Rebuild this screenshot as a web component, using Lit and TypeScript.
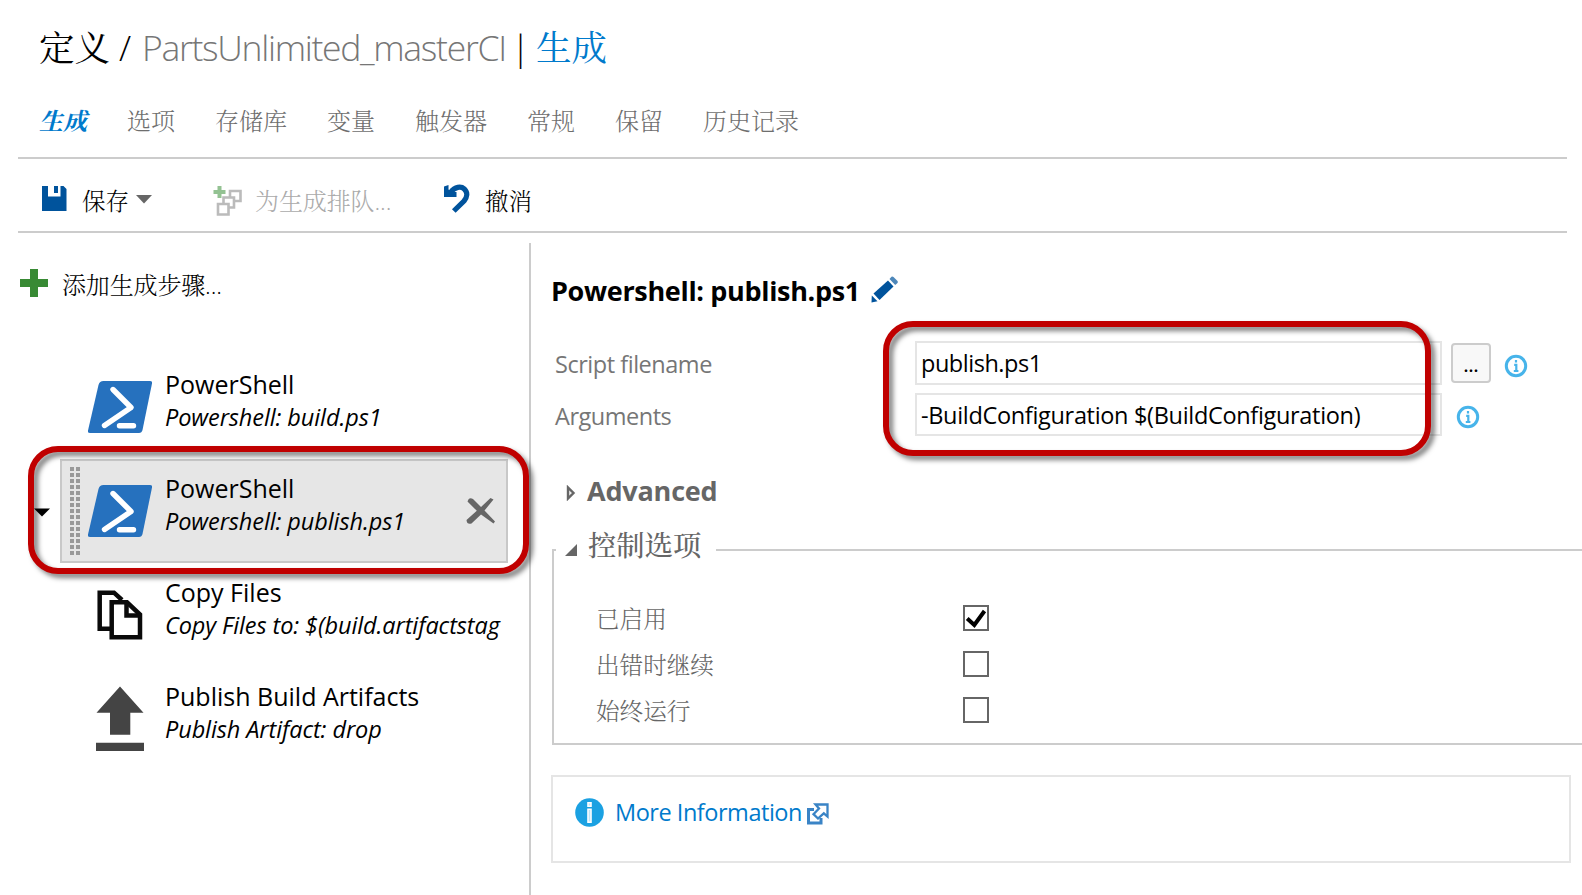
import { LitElement, html, css, svg, nothing } from "lit";
import { customElement } from "lit/decorators.js";
import { classMap } from "lit/directives/class-map.js";

interface Step {
  title: string;
  detail: string;
  icon: "powershell" | "copy" | "publish";
  selected?: boolean;
}

const TABS = ["生成", "选项", "存储库", "变量", "触发器", "常规", "保留", "历史记录"];

const STEPS: Step[] = [
  { title: "PowerShell", detail: "Powershell: build.ps1", icon: "powershell" },
  { title: "PowerShell", detail: "Powershell: publish.ps1", icon: "powershell", selected: true },
  { title: "Copy Files", detail: "Copy Files to: $(build.artifactstag", icon: "copy" },
  { title: "Publish Build Artifacts", detail: "Publish Artifact: drop", icon: "publish" },
];

const OPTIONS = [
  { label: "已启用", checked: true },
  { label: "出错时继续", checked: false },
  { label: "始终运行", checked: false },
];

const STEP_ICONS = {
  powershell: svg`
    <path d="M103.5 26H150q2.500 0 2 2.500L142.500 75q-.7 3-3.500 3H90q-2.500 0-2-2.500L98.500 30q1-4 5-4z" fill="#2671be"/>
    <path d="M113 34.500L131 52.500L104.500 70.500M119.500 70.700H133.500" fill="none" stroke="#fff" stroke-width="5.400" stroke-linecap="round" stroke-linejoin="round"/>`,
  copy: svg`
    <path d="M110 65.700H99.700V29.700H114L122 37" fill="none" stroke="#0a0a0a" stroke-width="4.500"/>
    <path d="M111.700 39.300H127L140 51.500V74.300H111.700z" fill="#fff" stroke="#0a0a0a" stroke-width="4.500"/>
    <path d="M126.500 39V52.500H140" fill="none" stroke="#0a0a0a" stroke-width="4.500"/>`,
  publish: svg`<path d="M120 19.500L143.500 45.700H130.300V67.700H110V45.700H96.500zM96 75.700H144V84H96z" fill="#444"/>`,
};

@customElement("app-root")
export class AppRoot extends LitElement {
  static styles = css`
    :host {
      display: block;
      position: relative;
      width: 1582px;
      height: 895px;
      overflow: hidden;
      background: #fff;
      color: #000;
      font-family: "Open Sans", "Noto Serif CJK SC", "Noto Sans CJK SC", serif;
      font-size: 24px;
    }
    * { box-sizing: border-box; }
    svg { display: block; flex: none; }
    .title {
      display: flex;
      padding: 23px 0 0 39px;
      height: 71px;
      line-height: 48px;
      font-size: 35.5px;
      font-weight: 300;
      white-space: pre;
    }
    .cjk { font-weight: 400; }
    .root { width: 80px; }
    .slash { width: 23px; }
    .name { width: 369px; color: #767676; letter-spacing: -1.3px; }
    .bar { width: 25px; }
    .link { color: #007acc; }
    .tabs {
      display: flex;
      gap: 40px;
      margin: 33px 15px 0 18px;
      padding-left: 21px;
      height: 55px;
      line-height: 34px;
      color: #6e6e6e;
      font-weight: 300;
      border-bottom: 2px solid #ccc;
    }
    .tab.active { color: #007acc; font-style: italic; font-weight: 700; }
    .toolbar {
      display: flex;
      align-items: center;
      margin: 0 15px 0 18px;
      height: 74px;
      padding: 9px 0 0 24px;
      border-bottom: 2px solid #ccc;
      font-weight: 300;
      font-size: 23.500px;
    }
    .toolbar span { white-space: nowrap; }
    .save { width: 54px; margin-left: 15px; }
    .queue { width: 189px; margin-left: 12px; color: #aaa; font-size: 24px; letter-spacing: -0.1px; }
    .undo { margin-left: 15px; }
    .icon-up { margin-top: -2px; }
    .caret { margin-top: -1px; }
    .queue-icon { margin: 2px 0 0 61px; }
    .main { display: flex; height: 662px; }
    .left { width: 529px; flex: none; }
    .add {
      display: flex;
      align-items: center;
      height: 122px;
      padding: 0 0 22px 20px;
      gap: 14px;
      font-weight: 300;
      letter-spacing: -0.15px;
    }
    .step { display: flex; height: 104px; }
    .gutter { width: 60px; flex: none; padding: 49px 0 0 34px; }
    .card { display: flex; width: 448px; border: 2px solid transparent; }
    .selected .card { background: #e6e6e6; border-color: #c8c8c8; }
    .grip { width: 26px; padding: 6px 0 0 8px; flex: none; }
    .text { width: 313px; padding: 11px 0 0 13px; flex: none; white-space: nowrap; }
    .step-title { font-size: 25px; line-height: 32px; }
    .step-detail { font-size: 23.500px; line-height: 34px; font-style: italic; letter-spacing: -0.1px; }
    .remove { margin: 36px 0 0 1px; }
    .right {
      flex: 1;
      min-width: 0;
      margin-top: 10px;
      border-left: 2px solid #ccc;
      padding-top: 27px;
    }
    .heading {
      display: flex;
      margin-left: 20px;
      height: 40px;
      line-height: 42px;
      font-size: 27px;
      font-weight: 700;
      letter-spacing: -0.33px;
      gap: 11px;
    }
    .heading svg { margin-top: 6px; }
    .fields { display: grid; gap: 8px; margin: 31px 0 0 24px; }
    .field { display: flex; height: 44px; line-height: 42px; font-size: 23.500px; letter-spacing: -0.47px; }
    .field label { width: 360px; color: #767676; line-height: 46px; }
    .box { width: 527px; height: 44px; border: 2px solid #e5e5e5; padding-left: 4px; white-space: nowrap; line-height: 41px; }
    .box.short { height: 43px; letter-spacing: -0.32px; line-height: 40px; }
    .browse {
      width: 40px;
      height: 40px;
      margin: 2px 13px 0 9px;
      border: 2px solid #ccc;
      border-radius: 4px;
      background: #f8f8f8;
      text-align: center;
      font-size: 18px;
      font-weight: 600;
      line-height: 41px;
      letter-spacing: 0;
    }
    .info { margin-top: 13px; }
    .info.near { margin-left: 14px; margin-top: 12px; }
    .advanced {
      display: flex;
      align-items: center;
      gap: 11px;
      height: 40px;
      margin: 33px 0 0 35px;
      color: #666;
      font-size: 27px;
      font-weight: 700;
      letter-spacing: -0.2px;
    }
    .advanced svg { margin-top: 6px; }
    fieldset {
      margin: 20px 0 0 21px;
      padding: 0 0 0 2px;
      height: 215px;
      border: 2px solid #ccc;
      border-right: 0;
    }
    legend {
      display: flex;
      width: 160px;
      height: 40px;
      padding: 0 0 0 9px;
      gap: 11px;
      color: #666;
      font-size: 28.300px;
      font-weight: 500;
      line-height: 31px;
    }
    legend svg { margin-top: 14px; }
    .options { padding: 25px 0 0 40px; color: #666; font-size: 23.600px; font-weight: 300; }
    .option { display: flex; align-items: center; height: 46px; }
    .option label { width: 367px; }
    .check { width: 26px; height: 26px; border: 2px solid #666; }
    .more {
      display: flex;
      margin: 30px 0 0 20px;
      width: 1020px;
      height: 88px;
      padding: 18px 0 0 22px;
      border: 2px solid #e5e5e5;
      font-size: 23.500px;
      line-height: 34px;
      letter-spacing: -0.47px;
      color: #007acc;
    }
    .more span { margin: 0 5px 0 11px; }
    .more .round { margin-top: 3px; }
    .more .ext { margin-top: 8px; }
    .callout {
      position: absolute;
      border: 6px solid #c00000;
      border-radius: 30px;
      filter: drop-shadow(4px 4px 2.500px rgba(0, 0, 0, 0.5));
      pointer-events: none;
    }
    .callout.step-mark { left: 28px; top: 446px; width: 501px; height: 128px; }
    .callout.field-mark { left: 883px; top: 321px; width: 548px; height: 135px; }
  `;

  private infoIcon(cls: string) {
    return html`<svg class="info ${cls}" width="24" height="24" viewBox="0 0 24 24">
      <circle cx="12" cy="12" r="9.700" fill="#fff" stroke="#47b4ea" stroke-width="3"/>
      <path d="M12 6v2.600M10.200 10.800H12.300V17M9.800 17h4.600" stroke="#47b4ea" stroke-width="2.200" fill="none"/>
    </svg>`;
  }

  private step(s: Step) {
    return html`<div class=${classMap({ step: true, selected: !!s.selected })}>
      <div class="gutter">
        ${s.selected ? html`<svg width="16" height="9" viewBox="0 0 16 9"><path d="M0 .5H16L8 8.500z"/></svg>` : nothing}
      </div>
      <div class="card">
        <div class="grip">
          ${s.selected
            ? html`<svg width="10" height="90" viewBox="0 0 10 90">
                <path d="M2 0V90M8 0V90" stroke="#999" stroke-width="4" stroke-dasharray="4 2"/>
              </svg>`
            : nothing}
        </div>
        <svg width="64" height="100" viewBox="88 2 64 100">${STEP_ICONS[s.icon]}</svg>
        <div class="text">
          <div class="step-title">${s.title}</div>
          <div class="step-detail">${s.detail}</div>
        </div>
        ${s.selected
          ? html`<svg class="remove" width="30" height="28" viewBox="0 0 30 28">
              <path d="M1.500 4.500Q3 -.5 7 2L15 10L24.500 1L27.500 2.500L18.500 13.500L29 24.500L27.500 26.500L15 17.500L5.500 26.500Q1 28 .5 23L10.800 13.800z" fill="#666"/>
            </svg>`
          : nothing}
      </div>
    </div>`;
  }

  render() {
    return html`
      <div class="title">
        <span class="root cjk">定义</span><span class="slash">/</span><span class="name">PartsUnlimited_masterCI</span><span class="bar">|</span><span class="cjk link">生成</span>
      </div>
      <nav class="tabs">
        ${TABS.map((t, i) => html`<span class=${classMap({ tab: true, active: i === 0 })}>${t}</span>`)}
      </nav>
      <div class="toolbar">
        <svg class="icon-up" width="25" height="25" viewBox="0 0 25 25">
          <path d="M0 0H6V10.500H18.500V0H21.500L24.500 3V25H0z" fill="#00539c"/><path d="M12 0H16V7H12z" fill="#00539c"/>
        </svg>
        <span class="save">保存</span>
        <svg class="caret" width="16" height="9" viewBox="0 0 16 9"><path d="M0 0H16L8 8.500z" fill="#666"/></svg>
        <svg class="queue-icon" width="30" height="30" viewBox="0 0 30 30">
          <path d="M6.500 0V12M.5 6H12.500" stroke="#93c292" stroke-width="4"/>
          <g fill="#fff" stroke="#bbb" stroke-width="2.600">
            <path d="M17 5H27.500V15H17z"/><path d="M10.500 11.500H21V21.500H10.500z"/><path d="M5 18H15.500V28.500H5z"/>
          </g>
        </svg>
        <span class="queue">为生成排队...</span>
        <svg class="icon-up" width="26" height="30" viewBox="0 0 26 30">
          <path d="M6.500 8.500C11 2.500 17 2 20.300 5C24 8.500 23.300 13 20 17L9.800 27" fill="none" stroke="#00539c" stroke-width="5.200"/>
          <path d="M0 2.500L4.500 1V5.500L6.500 7.500L12.500 8V13H0z" fill="#00539c"/>
        </svg>
        <span class="undo">撤消</span>
      </div>
      <div class="main">
        <section class="left">
          <div class="add">
            <svg width="28" height="28" viewBox="0 0 28 28"><path d="M14 0V28M0 14H28" stroke="#388a34" stroke-width="8"/></svg>
            <span>添加生成步骤...</span>
          </div>
          ${STEPS.map((s) => this.step(s))}
        </section>
        <section class="right">
          <div class="heading">
            <span>Powershell: publish.ps1</span>
            <svg width="28" height="28" viewBox="0 0 28 28">
              <path d="M2.500 17.500L17 4.500L22.500 10.500L8.500 24z" fill="#00539c"/>
              <path d="M.8 19.500L6.500 25.300L.5 26.500z" fill="#00539c"/>
              <path d="M18.500 3L20.500 .8Q21.500 0 22.500 1L26.500 5Q27.300 6 26.500 7L24.200 9z" fill="#4d87ba"/>
            </svg>
          </div>
          <div class="fields">
            <div class="field">
              <label>Script filename</label>
              <div class="box">publish.ps1</div>
              <div class="browse">...</div>
              ${this.infoIcon("")}
            </div>
            <div class="field">
              <label>Arguments</label>
              <div class="box short">-BuildConfiguration $(BuildConfiguration)</div>
              ${this.infoIcon("near")}
            </div>
          </div>
          <div class="advanced">
            <svg width="10" height="16" viewBox="0 0 10 16"><path d="M2 2.500V13.500L7.500 8z" fill="#eee" stroke="#666" stroke-width="2.400"/></svg>
            <span>Advanced</span>
          </div>
          <fieldset>
            <legend>
              <svg width="12" height="12" viewBox="0 0 12 12"><path d="M12 0V12H0z" fill="#666"/></svg>
              <span>控制选项</span>
            </legend>
            <div class="options">
              ${OPTIONS.map(
                (o) => html`<div class="option">
                  <label>${o.label}</label>
                  <div class="check">
                    ${o.checked
                      ? html`<svg width="22" height="22" viewBox="0 0 22 22"><path d="M2.200 11.500L9.300 18L19.500 4" fill="none" stroke="#000" stroke-width="4"/></svg>`
                      : nothing}
                  </div>
                </div>`,
              )}
            </div>
          </fieldset>
          <div class="more">
            <svg class="round" width="29" height="29" viewBox="0 0 29 29">
              <circle cx="14.500" cy="14.500" r="14.300" fill="#1ba1e2"/>
              <path d="M12.200 4H16.800V9H12.200zM12.200 10.500H16.800V25H12.200z" fill="#fff"/>
              <path d="M13.700 5.500H15.300V7.500H13.700zM13.700 12H15.300V23.500H13.700z" fill="#bfe4f7"/>
            </svg>
            <span>More Information</span>
            <svg class="ext" width="22" height="22" viewBox="0 0 22 22">
              <path d="M7 6.500H1.500V20H14V15" fill="none" stroke="#3a84c6" stroke-width="3"/>
              <path d="M8.500 1.500H20.500V13.500L16.800 10.300L11 15.500L6.500 11.200L12 5.500z" fill="#fff" stroke="#3a84c6" stroke-width="2.300"/>
            </svg>
          </div>
        </section>
      </div>
      <div class="callout step-mark"></div>
      <div class="callout field-mark"></div>
    `;
  }
}
